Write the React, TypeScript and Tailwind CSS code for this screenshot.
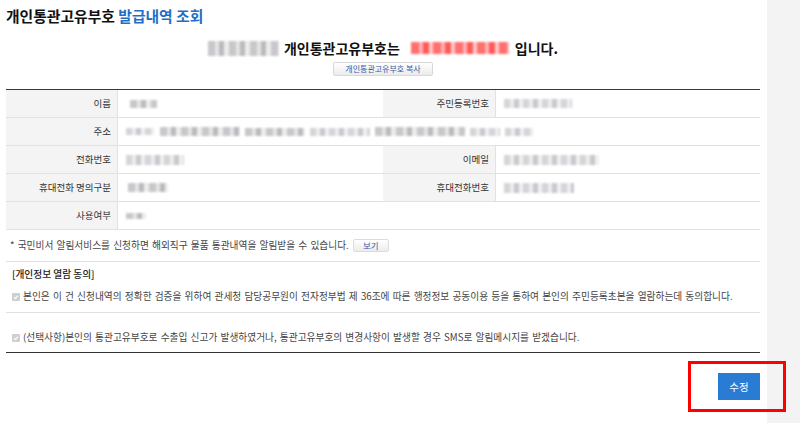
import React from 'react';

const font = 'font-["Noto_Sans_CJK_KR","Noto_Sans",sans-serif]';

// blurred (masked) personal data
function Masked({ className }: { className: string }) {
  return <span className={`inline-block blur-[1.2px] ${className}`} />;
}

const grayStripes =
  'bg-[repeating-linear-gradient(90deg,#c9c7c9_0_7px,#e4e4e8_7px_11px,#b9bbbd_11px_16px,#ececec_16px_21px)]';
const lightStripes =
  'bg-[repeating-linear-gradient(90deg,#d6d4d8_0_6px,#ededf0_6px_10px,#c7c9cc_10px_15px,#f0f0f0_15px_19px)]';

function Checkbox() {
  return (
    <span className="inline-flex items-center justify-center w-[8px] h-[8px] bg-[#cfcfcf] rounded-[1px] mr-[3px] shrink-0">
      <svg width="6" height="6" viewBox="0 0 6 6">
        <path d="M1 3.2 L2.4 4.6 L5 1.6" stroke="#fff" strokeWidth="1.1" fill="none" />
      </svg>
    </span>
  );
}

function Label({ children }: { children?: React.ReactNode }) {
  return (
    <div className="bg-[#f4f4f4] border-r border-b border-[#e2e2e2] flex items-center justify-end pr-[6px] text-[9.5px] text-[#333]">
      {children}
    </div>
  );
}

function Value({ children, wide }: { children?: React.ReactNode; wide?: boolean }) {
  return (
    <div className={`flex items-center pl-[8px] border-b border-[#e2e2e2] ${wide ? 'col-span-3' : ''}`}>
      {children}
    </div>
  );
}

function Table() {
  return (
    <div className="mt-[13px] border-t border-[#3a3a3a] grid grid-cols-[112px_265px_113px_1fr] auto-rows-[28px]">
      <Label>이름</Label>
      <Value><Masked className={`ml-[4px] w-[27px] h-[8px] ${grayStripes}`} /></Value>
      <Label>주민등록번호</Label>
      <Value><Masked className={`w-[68px] h-[9px] ${lightStripes}`} /></Value>

      <Label>주소</Label>
      <Value wide>
        <Masked className={`w-[28px] h-[7px] ${lightStripes}`} />
        <Masked className={`ml-[6px] w-[80px] h-[9px] ${grayStripes}`} />
        <Masked className={`ml-[5px] w-[60px] h-[8px] ${grayStripes}`} />
        <Masked className={`ml-[5px] w-[60px] h-[8px] ${lightStripes}`} />
        <Masked className={`ml-[5px] w-[90px] h-[9px] ${grayStripes}`} />
        <Masked className={`ml-[5px] w-[30px] h-[8px] ${lightStripes}`} />
        <Masked className={`ml-[5px] w-[28px] h-[8px] ${lightStripes}`} />
      </Value>

      <Label>전화번호</Label>
      <Value><Masked className={`w-[58px] h-[10px] ${lightStripes}`} /></Value>
      <Label>이메일</Label>
      <Value><Masked className={`w-[95px] h-[10px] ${lightStripes}`} /></Value>

      <Label>휴대전화 명의구분</Label>
      <Value><Masked className={`ml-[2px] w-[40px] h-[9px] ${grayStripes}`} /></Value>
      <Label>휴대전화번호</Label>
      <Value><Masked className={`w-[70px] h-[10px] ${lightStripes}`} /></Value>

      <Label>사용여부</Label>
      <Value wide><Masked className={`w-[20px] h-[6px] ${grayStripes}`} /></Value>
    </div>
  );
}

export default function App() {
  return (
    <div className={`relative flex w-full h-[423px] overflow-hidden bg-white ${font}`}>
      <main className="w-[767px] bg-white pl-[6px] pr-[7px]">
        <h1 className="pt-[7px] text-[14.8px] leading-[18px] font-bold text-[#111]">
          개인통관고유부호 <span className="text-[#1f6fc6]">발급내역 조회</span>
        </h1>

        <div className="mt-[13px] flex items-center justify-center h-[20px] text-[14px] font-semibold text-[#111]">
          <Masked className={`w-[71px] h-[15px] ${grayStripes}`} />
          <span className="ml-[5px]">개인통관고유부호는</span>
          <Masked className="ml-[11px] w-[98px] h-[12px] bg-[repeating-linear-gradient(90deg,#ff7070_0_8px,#ffb0b0_8px_12px,#ff5a5a_12px_18px,#ffc8c8_18px_22px)]" />
          <span className="ml-[6px]">입니다.</span>
        </div>

        <div className="mt-[4px] flex justify-center">
          <button className="w-[100px] h-[14px] rounded-[2px] border border-[#d8d8d8] bg-gradient-to-b from-white to-[#ebebeb] text-[8px] leading-none text-[#3a5aa8]">
            개인통관고유부호 복사
          </button>
        </div>

        <Table />

        <div className="h-[32px] flex items-center pl-[4px] text-[9.7px] text-[#444] border-b border-[#e0e0e0] [word-spacing:1px]">
          * 국민비서 알림서비스를 신청하면 해외직구 물품 통관내역을 알림받을 수 있습니다.
          <button className="ml-[4px] w-[36px] h-[13px] rounded-[2px] border border-[#dcdcdc] bg-gradient-to-b from-white to-[#ececec] text-[8.5px] leading-none text-[#3a5aa8] [word-spacing:0]">
            보기
          </button>
        </div>

        <div className="pl-[6px] h-[24px] flex items-center text-[9.7px] text-[#222] font-medium">
          [개인정보 열람 동의]
        </div>
        <div className="pl-[6px] h-[27px] pb-[5px] flex items-center text-[9.7px] text-[#444] border-b border-[#e0e0e0] [word-spacing:1px]">
          <Checkbox />
          본인은 이 건 신청내역의 정확한 검증을 위하여 관세청 담당공무원이 전자정부법 제 36조에 따른 행정정보 공동이용 등을 통하여 본인의 주민등록초본을 열람하는데 동의합니다.
        </div>
        <div className="pl-[6px] h-[40px] pt-[10px] flex items-center text-[9.7px] text-[#444] border-b border-[#333] [word-spacing:1px]">
          <Checkbox />
          (선택사항)본인의 통관고유부호로 수출입 신고가 발생하였거나, 통관고유부호의 변경사항이 발생할 경우 SMS로 알림메시지를 받겠습니다.
        </div>

        <div className="mt-[20px] flex justify-end">
          <button className="w-[42px] h-[27px] bg-[#2a7bd4] text-white text-[10.5px]">수정</button>
        </div>
      </main>
      <aside className="flex-1 bg-[#f3f3f3]" />

      {/* annotation box */}
      <div className="absolute left-[688px] top-[361px] w-[98px] h-[51px] border-[3px] border-[#ff0000]" />
    </div>
  );
}
